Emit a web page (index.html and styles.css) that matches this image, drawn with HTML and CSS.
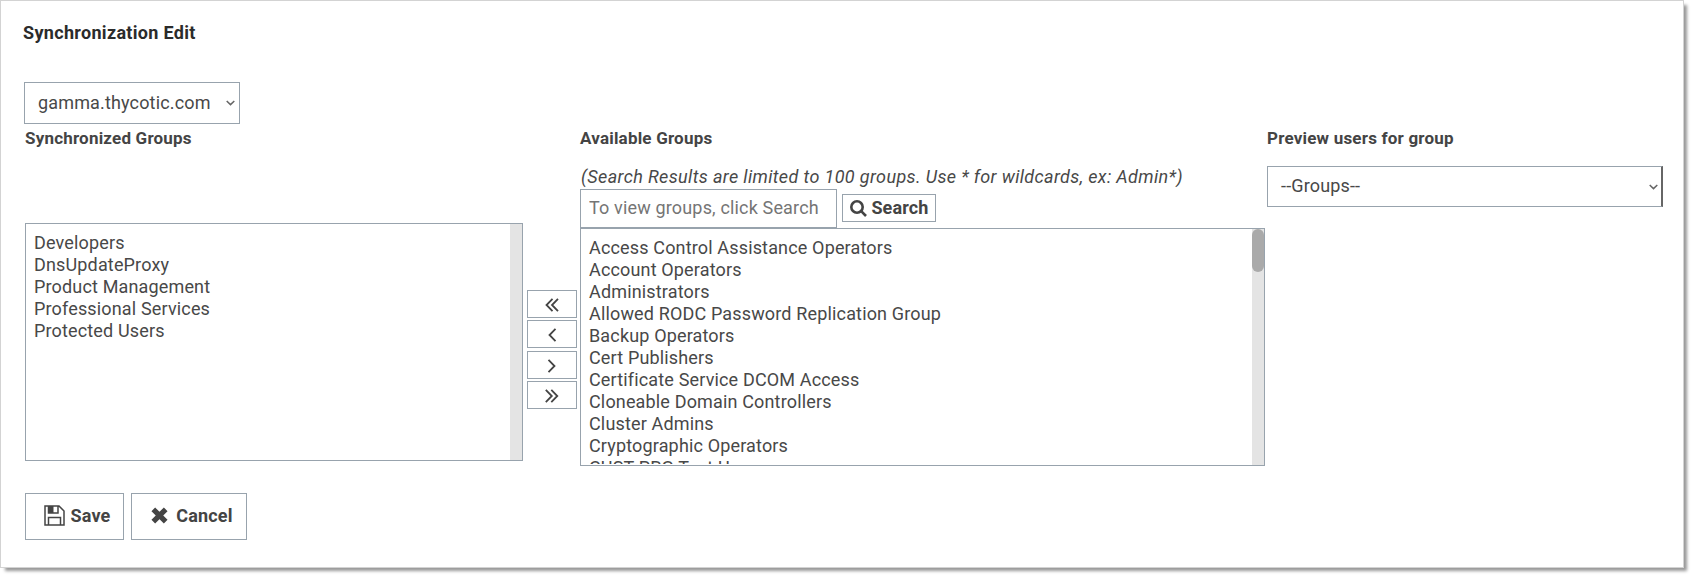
FILE: index.html
```html
<!DOCTYPE html>
<html lang="en">
<head>
<meta charset="utf-8">
<title>Synchronization Edit</title>
<link rel="stylesheet" href="styles.css">
</head>
<body>
<main class="card">
  <h1 class="title">Synchronization Edit</h1>
  <div class="select domain"><span>gamma.thycotic.com</span><svg class="caret" viewBox="0 0 9 6"><path d="M.7 1 4.5 4.6 8.3 1"/></svg></div>
  <div class="columns">
    <section class="synced">
      <h2 class="label">Synchronized Groups</h2>
      <div class="listbox left-list">
        <ul class="items">
          <li>Developers</li><li>DnsUpdateProxy</li><li>Product Management</li><li>Professional Services</li><li>Protected Users</li>
        </ul>
        <div class="track"></div>
      </div>
    </section>
    <div class="movers">
      <button class="btn move"><svg viewBox="0 0 14 14"><path d="M7.500.8 1.500 7l6 6.200M13 .8 7 7l6 6.200"/></svg></button>
      <button class="btn move"><svg viewBox="0 0 14 14"><path d="M10.500.8 4.500 7l6 6.200"/></svg></button>
      <button class="btn move lower"><svg viewBox="0 0 14 14"><path d="M3.500.8 9.500 7l-6 6.200"/></svg></button>
      <button class="btn move"><svg viewBox="0 0 14 14"><path d="M.8.8 6.800 7l-6 6.200M6.300.8l6 6.200-6 6.200"/></svg></button>
    </div>
    <section class="available">
      <h2 class="label">Available Groups</h2>
      <p class="hint">(Search Results are limited to 100 groups. Use * for wildcards, ex: Admin*)</p>
      <div class="search-row">
        <input class="search-input" placeholder="To view groups, click Search">
        <button class="btn search-btn"><svg class="glass" viewBox="0 0 17 17"><circle cx="7" cy="7" r="5.700"/><path d="m11.200 11.200 4.800 4.800"/></svg>Search</button>
      </div>
      <div class="listbox right-list">
        <ul class="items">
          <li>Access Control Assistance Operators</li><li>Account Operators</li><li>Administrators</li><li>Allowed RODC Password Replication Group</li><li>Backup Operators</li><li>Cert Publishers</li><li>Certificate Service DCOM Access</li><li>Cloneable Domain Controllers</li><li>Cluster Admins</li><li>Cryptographic Operators</li><li>CUST PRG Test Users</li>
        </ul>
        <div class="track"><div class="thumb"></div></div>
      </div>
    </section>
    <section class="preview">
      <h2 class="label">Preview users for group</h2>
      <div class="select groups"><span>--Groups--</span><svg class="caret" viewBox="0 0 9 6"><path d="M.7 1 4.500 4.600 8.300 1"/></svg></div>
    </section>
  </div>
  <div class="actions">
    <button class="btn action save"><svg class="disk" viewBox="0 0 21 21"><path class="line" d="M1 1h14l5 5v14H1z M4.500 20v-7.500h12V20 M4.500 1v7h9.500V1"/><path class="fill" d="M4.500 1h5v7h-5z"/></svg>Save</button>
    <button class="btn action cancel"><svg class="cross" viewBox="0 0 17 17"><path d="m2.300 2.300 12.400 12.400m0-12.400L2.300 14.700"/></svg>Cancel</button>
  </div>
</main>
</body>
</html>
```
FILE: styles.css
```css
* { box-sizing: border-box; }
body { margin: 0; min-height: 576px; background: #fff; color: #484848; font: 18px/22px Roboto, sans-serif; letter-spacing: .155px; }
.card { width: 1684px; height: 568px; padding: 21px 20px 0 23px; border: 1px solid #d3d3d3; background: #fff; box-shadow: 4px 4px 3px -1px #999; }
.title { margin: 0 0 39px -1px; font-size: 18px; line-height: 21px; font-weight: 700; letter-spacing: .32px; color: #2b2b2b; }
.select { display: flex; align-items: center; justify-content: space-between; border: 1px solid #98a3ad; }
.domain { width: 216px; height: 42px; padding: 0 4px 0 13px; }
.caret { width: 9px; height: 6px; fill: none; stroke: #666; stroke-width: 1.5; }
.columns { display: flex; height: 342px; padding-left: 1px; }
.label { margin: 0; padding-top: 4px; font-size: 17px; line-height: 21px; font-weight: 700; letter-spacing: .2px; color: #444; }
.synced { width: 502px; }
.listbox { display: flex; justify-content: space-between; height: 238px; border: 1px solid #98a3ad; overflow: hidden; background: #fff; }
.left-list { width: 498px; margin-top: 74px; }
.items { list-style: none; margin: 0; padding: 8px; white-space: nowrap; }
.track { width: 12px; background: #e4e4e4; }
.thumb { height: 43px; border-radius: 6px; background: #aaa; }
.btn { display: flex; align-items: center; justify-content: center; margin: 0; padding: 0; border: 1px solid #98a3ad; background: #fff; color: #444; font: 700 18px/22px Roboto, sans-serif; letter-spacing: .15px; }
.movers { display: flex; flex-direction: column; gap: 2px; width: 53px; padding-top: 166px; }
.move { width: 50px; height: 28px; padding-top: 2px; }
.move svg { width: 14px; height: 14px; fill: none; stroke: #444; stroke-width: 1.8; }
.lower { margin-top: 1px; }
.available { width: 687px; }
.hint { margin: 16px 0 0 1px; font-style: italic; line-height: 24px; letter-spacing: .365px; white-space: nowrap; }
.search-row { display: flex; gap: 5px; align-items: flex-start; height: 39px; }
.search-input { width: 257px; height: 39px; margin: 0; padding: 0 8px 2px; border: 1px solid #98a3ad; font: 18px Roboto, sans-serif; letter-spacing: .16px; color: #444; outline: 0; }
.search-input::placeholder { color: #757575; }
.search-btn { width: 94px; height: 28px; margin-top: 5px; gap: 4px; padding-left: 1px; }
.glass { width: 17px; height: 17px; fill: none; stroke: #444; stroke-width: 2.600; }
.right-list { width: 685px; }
.right-list .items { height: 235px; overflow: hidden; }
.groups { width: 396px; height: 41px; margin-top: 17px; padding: 0 3px 0 13px; border-right: 2px solid #666; }
.groups span { padding-bottom: 2px; }
.actions { display: flex; gap: 7px; margin-top: 27px; padding-left: 1px; }
.action { height: 47px; padding-bottom: 2px; }
.save { width: 99px; gap: 6px; padding-left: 5px; }
.cancel { width: 116px; gap: 8px; padding-left: 6px; }
.disk { width: 21px; height: 21px; }
.disk .line { fill: none; stroke: #444; stroke-width: 1.500; }
.disk .fill { fill: #444; }
.cross { width: 17px; height: 17px; fill: none; stroke: #444; stroke-width: 5.2; }
```
